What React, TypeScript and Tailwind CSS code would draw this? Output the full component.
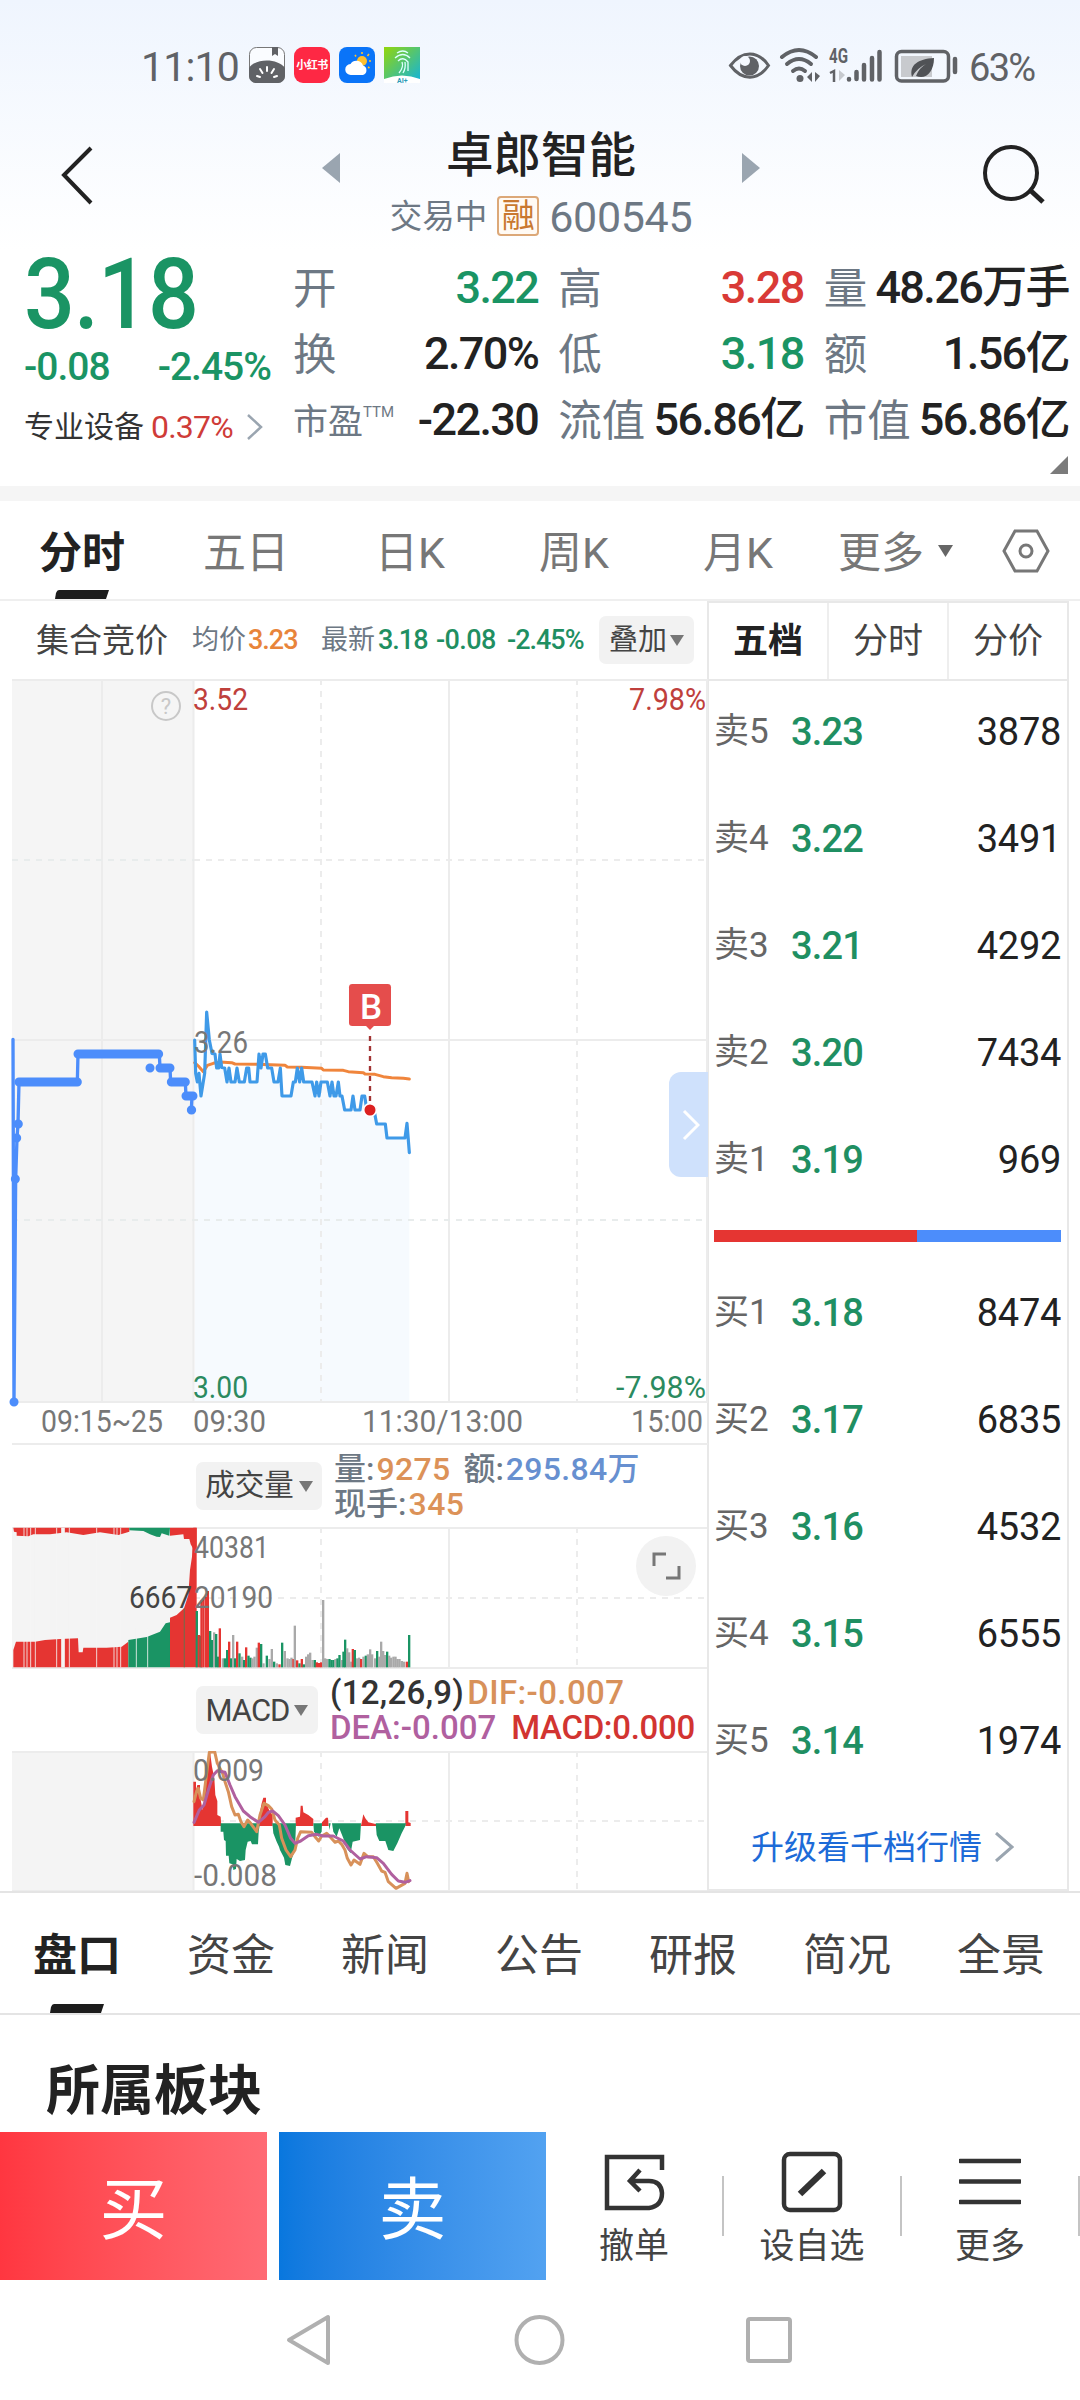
import type { ReactNode } from "react";
import clsx from "clsx";

const RED = "#e53532";
const GREEN = "#1a9464";
const GREY = "#a9a9a9";

interface Level {
  label: string;
  price: string;
  volume: string;
}

const asks: Level[] = [
  { label: "卖5", price: "3.23", volume: "3878" },
  { label: "卖4", price: "3.22", volume: "3491" },
  { label: "卖3", price: "3.21", volume: "4292" },
  { label: "卖2", price: "3.20", volume: "7434" },
  { label: "卖1", price: "3.19", volume: "969" },
];

const bids: Level[] = [
  { label: "买1", price: "3.18", volume: "8474" },
  { label: "买2", price: "3.17", volume: "6835" },
  { label: "买3", price: "3.16", volume: "4532" },
  { label: "买4", price: "3.15", volume: "6555" },
  { label: "买5", price: "3.14", volume: "1974" },
];

// Chart series use a grid of 3 units per pixel.
const PRICE =
  "584,240 587,340 592,366 597,340 603,408 614,340 620,156 628,240 636,280 645,282 650,324 656,324 660,282 665,322 674,324 681,366 687,324 693,366 705,366 711,324 718,366 733,366 740,324 746,324 750,366 771,366 777,282 783,324 789,282 796,282 803,324 815,324 822,366 834,366 841,324 846,408 873,408 880,366 886,366 892,324 899,366 905,324 911,366 936,366 945,408 950,366 957,408 963,366 982,366 990,408 996,366 1002,408 1008,408 1015,366 1020,408 1026,408 1034,450 1053,450 1059,408 1065,450 1080,450 1086,408 1094,408 1099,440 1110,450 1124,460 1130,492 1156,492 1161,534 1215,534 1221,490 1228,578";
const AVERAGE =
  "584,308 595,318 610,335 622,316 640,310 660,306 695,308 705,312 770,313 855,316 862,321 905,322 965,325 970,330 1030,331 1045,335 1090,338 1095,342 1125,343 1150,350 1175,353 1210,355 1228,357";
const AUCTION = "39,238 42,1326 47,657 51,534 54,492 57,366 232,366 234,282 478,282 480,324 510,324 512,366 556,366 558,408 576,408 574,450";

const DIF =
  "42,200 50,168 55,160 62,190 70,195 78,130 88,52 104,50 112,85 120,100 128,115 135,140 145,170 155,215 165,240 175,238 183,260 192,275 203,255 212,265 230,290 240,240 252,205 265,212 275,222 285,255 298,270 305,310 318,345 332,365 345,345 353,310 362,290 395,292 405,305 416,318 425,303 440,295 450,305 465,322 475,318 485,328 495,345 502,370 513,390 522,375 540,388 552,355 563,365 580,365 592,385 605,408 615,412 625,440 648,460 675,445 681,415 686,440";
const DEA =
  "42,262 58,225 72,210 85,165 100,120 112,107 135,112 150,150 165,185 190,228 210,245 235,262 255,245 265,232 278,228 295,242 315,270 332,310 345,325 362,318 385,302 410,298 430,303 460,303 490,318 510,345 540,372 560,365 590,368 610,385 635,418 655,438 675,442 690,437";

// [x, top, colour], r = up, g = down, n = flat
type Bar = [number, number, "r" | "g" | "n"];
const bars: Bar[] = [
  [590, 288, "g"], [596, 360, "r"], [602, 362, "g"], [604, 255, "r"], [610, 250, "r"], [618, 245, "r"], [623, 228, "r"],
  [630, 348, "g"], [636, 375, "g"], [642, 352, "n"], [648, 357, "g"], [654, 425, "g"], [659, 340, "r"], [668, 430, "n"],
  [674, 430, "g"], [681, 405, "g"], [687, 380, "r"], [693, 430, "g"], [699, 360, "n"], [705, 430, "g"], [711, 380, "r"],
  [718, 415, "g"], [726, 425, "n"], [732, 435, "g"], [738, 397, "r"], [745, 422, "g"], [751, 428, "g"], [757, 430, "n"],
  [763, 425, "n"], [770, 398, "n"], [776, 383, "r"], [783, 387, "g"], [790, 445, "n"], [800, 422, "g"], [808, 432, "n"],
  [815, 402, "n"], [822, 440, "g"], [830, 445, "n"], [838, 448, "r"], [846, 383, "g"], [854, 408, "n"], [862, 430, "n"],
  [868, 432, "n"], [874, 428, "n"], [880, 432, "r"], [884, 332, "n"], [891, 436, "r"], [898, 445, "g"], [905, 432, "r"],
  [911, 448, "g"], [918, 425, "n"], [924, 418, "n"], [930, 413, "n"], [937, 435, "n"], [944, 435, "g"], [950, 442, "r"],
  [957, 444, "r"], [963, 442, "r"], [969, 255, "n"], [975, 430, "n"], [981, 432, "n"], [988, 432, "g"], [994, 435, "g"],
  [1000, 435, "g"], [1006, 432, "n"], [1012, 430, "g"], [1018, 420, "g"], [1025, 435, "n"], [1030, 410, "g"], [1035, 374, "g"],
  [1041, 400, "n"], [1047, 412, "n"], [1053, 440, "n"], [1058, 402, "r"], [1064, 405, "g"], [1071, 430, "n"], [1077, 428, "n"],
  [1083, 432, "r"], [1090, 425, "n"], [1097, 422, "g"], [1103, 418, "n"], [1110, 403, "n"], [1116, 418, "n"], [1125, 430, "n"],
  [1131, 408, "g"], [1137, 425, "n"], [1143, 380, "n"], [1149, 408, "n"], [1155, 420, "n"], [1161, 410, "g"], [1167, 422, "n"],
  [1173, 428, "n"], [1180, 425, "n"], [1186, 425, "n"], [1192, 432, "n"], [1198, 432, "n"], [1205, 438, "n"], [1211, 440, "n"],
  [1220, 440, "r"], [1227, 360, "g"],
];
const barColor = { r: RED, g: GREEN, n: GREY };

function StatusBar() {
  return (
    <div className="flex h-[66px] items-center pl-[141px] pr-[43px] mt-[32px] text-[#606266]">
      <span className="w-[98px] whitespace-nowrap pt-[5px] text-[41px] leading-none tracking-[-0.8px]">11:10</span>
      <div className="ml-[10px] flex gap-[9px]">
        <svg width="36" height="36" viewBox="0 0 36 36">
          <rect x="0.5" y="0.5" width="35" height="35" rx="7" fill="#fafcff" stroke="#777" />
          <path d="M0 21C6 11 29 11 36 21V29a7 7 0 0 1-7 7H7a7 7 0 0 1-7-7z" fill="#606266" />
          <path d="M23 0h6v9l-3-2-3 2z" fill="#606266" />
          <path d="M18 20v4M11 22l2.500 4M25 22l-2.500 4M8 29l3 1M28 29l-3 1" stroke="#fff" strokeWidth="2" strokeLinecap="round" />
        </svg>
        <div className="flex h-9 w-9 items-center justify-center rounded-[9px] bg-[#fe2844] text-[11px] font-bold leading-none tracking-[-0.5px] text-white">
          小红书
        </div>
        <svg width="36" height="36" viewBox="0 0 36 36">
          <rect width="36" height="36" rx="8" fill="#0a74f8" />
          <circle cx="23" cy="14" r="5" fill="#ffc02e" />
          <path d="M23 5v2M30 7l-1.500 2M32 14h-2M16 8l1 1.500M29 20l1.500 1" stroke="#ffc02e" strokeWidth="1.600" />
          <path d="M12 28a5.500 5.500 0 0 1-.5-11 7 7 0 0 1 12.500 1.500A5 5 0 0 1 24 28z" fill="#fff" />
        </svg>
        <svg width="36" height="36" viewBox="0 0 36 36">
          <defs>
            <linearGradient id="ai" x1="0" y1="0" x2="1" y2="1">
              <stop offset="0" stopColor="#93d60a" />
              <stop offset="1" stopColor="#10b2e0" />
            </linearGradient>
          </defs>
          <rect width="36" height="36" fill="url(#ai)" />
          <path d="M0 32q18-7 36 0v4H0z" fill="#fff" />
          <path d="M13 6q6-4 11 0M11 11q8-7 15 0M14 14q5-5 10 1v9M18 15q2 5-3 11M21 15q1 6-2 11" stroke="#dff" strokeWidth="1.300" fill="none" />
          <text x="13" y="35.500" fontSize="7" fontWeight="700" fill="#2a9ab8">AI+</text>
        </svg>
      </div>
      <div className="flex-1" />
      <svg width="232" height="40" viewBox="0 0 232 40" fill="none" stroke="#606266">
        <path d="M2.500 20.500C14 5 30 5 40.500 20.500C30 36 14 36 2.500 20.500z" strokeWidth="3" />
        <circle cx="21.500" cy="21" r="9.500" fill="#606266" stroke="none" />
        <circle cx="17" cy="16" r="5" fill="#f4f8fe" stroke="none" />
        <g strokeWidth="4" strokeLinecap="round">
          <path d="M54 12Q71 -2 88 12" />
          <path d="M59 19Q71 9 83 19" />
          <path d="M65 26Q71 21 77 26" />
        </g>
        <circle cx="72" cy="33.500" r="3.500" fill="#606266" stroke="none" />
        <path d="M79 32l5-5v10zM87 27v10l5-6z" fill="#606266" stroke="none" />
        <text x="101" y="18" fontSize="21" fontWeight="700" fill="#606266" stroke="none" textLength="19" lengthAdjust="spacingAndGlyphs">4G</text>
        <path d="M102 28l4-2v11" strokeWidth="2.500" />
        <path d="M111 25v11l6-6z" fill="#c6c9ce" stroke="none" />
        <g strokeWidth="4.500" strokeLinecap="round">
          <path d="M121 34v.500M128.500 27v7M136 20v14.500M144 13v21.500M151.500 7v27.500" />
        </g>
        <rect x="168.500" y="6.500" width="52" height="29.500" rx="5" strokeWidth="3.500" />
        <rect x="173" y="11" width="31" height="21" fill="#c8cace" stroke="none" />
        <path d="M184 32c-3-12 6-18 22-19c0 14-8 22-18 18q3-8 10-12q-9 4-14 13z" fill="#505256" stroke="none" />
        <path d="M227 14v13" strokeWidth="4.500" strokeLinecap="round" />
      </svg>
      <span className="ml-[9px] w-[68px] whitespace-nowrap pt-[5px] text-[38px] leading-none tracking-[-1.700px]">63%</span>
    </div>
  );
}

function Header() {
  return (
    <div className="flex h-[150px] justify-between pl-[36px] pr-[26px]">
      <svg width="80" height="150" viewBox="0 0 80 150" fill="none" stroke="#222" strokeWidth="4">
        <path d="M55 50L28 77L55 105" />
      </svg>
      <div className="ml-[-8px] flex w-[438px] items-start justify-between">
        <svg className="mt-[55px]" width="18" height="30"><path d="M18 0v30L0 15z" fill="#9aa5b0" /></svg>
        <div className="flex flex-col items-center">
          <h1 className="mt-[31px] text-[47.500px] font-medium leading-[54px] text-[#222]">卓郎智能</h1>
          <div className="mt-[9px] flex items-center whitespace-nowrap text-[#6d7884]">
            <span className="pt-[2px] text-[32.500px] leading-[44px]">交易中</span>
            <span className="ml-[10px] flex h-[40px] w-[42px] items-center justify-center rounded-[4px] border-2 border-[#dca878] bg-[#fffaf4] text-[33px] leading-none text-[#c97830]">
              融
            </span>
            <span className="ml-[10px] pt-[3px] text-[43px] leading-[44px] tracking-[-0.300px]">600545</span>
          </div>
        </div>
        <svg className="mt-[55px]" width="18" height="30"><path d="M0 0v30L18 15z" fill="#9aa5b0" /></svg>
      </div>
      <svg width="80" height="150" viewBox="0 0 80 150" fill="none" stroke="#222" strokeWidth="4">
        <circle cx="37" cy="75" r="26" />
        <path d="M56 92L69 104" strokeWidth="5" />
      </svg>
    </div>
  );
}

interface QuoteProps {
  label: ReactNode;
  value: string;
  color?: string;
}

function Quote({ label, value, color = "text-[#222]" }: QuoteProps) {
  return (
    <div className="flex h-[66px] items-center justify-between whitespace-nowrap">
      <span className="pt-[6px] text-[43.500px] leading-none text-[#6d7884]">{label}</span>
      <span className={clsx("text-[45px] font-medium leading-none tracking-[-1.600px]", color)}>{value}</span>
    </div>
  );
}

function Summary() {
  return (
    <div className="relative flex h-[238px]">
      <div className="w-[293px] shrink-0 pl-[24px]">
        <div className="mt-[-4px] h-[101px] origin-left scale-x-[0.915] whitespace-nowrap text-[98px] font-medium leading-[101px] tracking-[-1px] text-[#1a9464]">
          3.18
        </div>
        <div className="flex w-[247px] justify-between whitespace-nowrap text-[39px] font-medium leading-[44px] tracking-[-1px] text-[#1a9464]">
          <span>-0.08</span>
          <span>-2.45%</span>
        </div>
        <div className="mt-[16px] flex h-[44px] items-center whitespace-nowrap text-[30px] leading-none text-[#333]">
          专业设备
          <span className="ml-[7px] text-[32px] tracking-[-0.800px] text-[#cf3c38]">0.37%</span>
          <svg className="ml-[13px]" width="17" height="28" fill="none" stroke="#9aa5b0" strokeWidth="2.500"><path d="M2 2L15 14L2 26" /></svg>
        </div>
      </div>
      <div className="mt-[6px] grid h-[198px] w-[776px] grid-cols-3 gap-x-[20px]">
        <Quote label="开" value="3.22" color="text-[#1a9464]" />
        <Quote label="高" value="3.28" color="text-[#d93a36]" />
        <Quote label="量" value="48.26万手" />
        <Quote label="换" value="2.70%" />
        <Quote label="低" value="3.18" color="text-[#1a9464]" />
        <Quote label="额" value="1.56亿" />
        <Quote
          label={
            <span className="flex items-start text-[35px]">
              市盈<span className="text-[15px] leading-none">TTM</span>
            </span>
          }
          value="-22.30"
        />
        <Quote label="流值" value="56.86亿" />
        <Quote label="市值" value="56.86亿" />
      </div>
      <svg className="absolute right-[12px] bottom-[12px]" width="18" height="18"><path d="M18 0v18H0z" fill="#7b7b7b" /></svg>
    </div>
  );
}

function Marker() {
  return <svg width="54" height="9"><path d="M4 0H54L51 9H0L1 3Q2 0 4 0z" fill="#1c1c1c" /></svg>;
}

function PeriodTabs() {
  const tabs = ["分时", "五日", "日K", "周K", "月K"];
  return (
    <div className="flex h-[100px] border-b-2 border-[#efefef] text-[43px] leading-none text-[#777]">
      {tabs.map((tab, i) => (
        <div key={tab} className="flex w-[164px] flex-col items-center justify-between pt-[31px]">
          <span className={clsx(i === 0 && "font-bold text-[#222]")}>{tab}</span>
          {i === 0 && <Marker />}
        </div>
      ))}
      <div className="flex items-start pl-[18px] pt-[31px]">
        更多
        <svg className="ml-[14px] mt-[13px]" width="15" height="12"><path d="M0 0H15L7.500 12z" fill="#666" /></svg>
        <svg className="ml-[49px] mt-[-3px]" width="48" height="44" viewBox="0 0 48 44" fill="none" stroke="#777" strokeWidth="3">
          <path d="M13 2H35L46 22L35 42H13L2 22z" />
          <circle cx="24" cy="22" r="6" />
        </svg>
      </div>
    </div>
  );
}

function Arrow({ className }: { className?: string }) {
  return <svg className={className} width="14" height="11"><path d="M0 0H14L7 11z" fill="#777" /></svg>;
}

// Vertical grid shared by the three plots
function Grid({ height, middle }: { height: number; middle: number }) {
  return (
    <g stroke="#ececec" strokeWidth="2" fill="none">
      <path d={`M12 1H707M12 ${height - 1}H707M193.500 0V${height}M449 0V${height}`} />
      <path d={`M321 0V${height}M577 0V${height}M194 ${middle}H707`} strokeDasharray="6 6" />
    </g>
  );
}

interface LabelProps {
  x: number;
  y: number;
  w: number;
  fill?: string;
  children: string;
}

function AxisLabel({ x, y, w, fill = "#777", children }: LabelProps) {
  return (
    <text x={x} y={y} fontSize="32" fill={fill} textLength={w} lengthAdjust="spacingAndGlyphs">
      {children}
    </text>
  );
}

function PriceChart() {
  return (
    <div className="relative h-[766px]">
      <svg width="708" height="766" viewBox="0 0 708 766">
        <rect x="12" y="0" width="181" height="724" fill="#f5f5f5" />
        <polygon points={`584,1326 ${PRICE} 1228,1326`} transform="translate(0 281) scale(.33333)" fill="#f6fafe" />
        <Grid height={724} middle={181} />
        <path d="M12 361H707M102 0V724M707 0V724" stroke="#ececec" strokeWidth="2" />
        <path d="M12 181H194M12 541H707" stroke="#e8ecec" strokeWidth="2" strokeDasharray="6 6" />
        <circle cx="166" cy="27" r="14" fill="none" stroke="#c8c8c8" strokeWidth="2" />
        <text x="166" y="35" fontSize="22" textAnchor="middle" fill="#c8c8c8">?</text>
        <AxisLabel x={193} y={31} w={55} fill="#bf403c">3.52</AxisLabel>
        <AxisLabel x={629} y={31} w={77} fill="#bf403c">7.98%</AxisLabel>
        <AxisLabel x={193} y={719} w={55} fill="#2b8a60">3.00</AxisLabel>
        <AxisLabel x={616} y={719} w={90} fill="#2b8a60">-7.98%</AxisLabel>
        <g transform="translate(0 281) scale(.33333)" fill="none" strokeLinejoin="round" strokeLinecap="round">
          <polyline points={AUCTION} stroke="#4c8dfb" strokeWidth="10" />
          <path d="M57 366H232M234 282H476M480 324H510M514 366H556M558 408H579M574 450h1M450 324h.1M54 492h1M50 534h.1M46 657h.1M42 1326h.1" stroke="#4c8dfb" strokeWidth="27" />
          <polyline points={AVERAGE} stroke="#f0853c" strokeWidth="9" />
          <polyline points={PRICE} stroke="#3f9ae8" strokeWidth="9.500" />
          <path d="M1110 228V440" stroke="#a23434" strokeWidth="7" strokeDasharray="15 15" strokeLinecap="butt" />
          <rect x="1047" y="72" width="126" height="126" rx="10" fill="#e54d4c" />
          <path d="M1096 196H1124L1110 210z" fill="#e54d4c" />
          <circle cx="1110" cy="450" r="19" fill="#dc2020" stroke="#fff" strokeWidth="5" />
        </g>
        <text x="371" y="340" fontSize="35" fontWeight="500" textAnchor="middle" fill="#fff">B</text>
        <AxisLabel x={194} y={374} w={54}>3.26</AxisLabel>
        <AxisLabel x={41} y={753} w={122}>09:15~25</AxisLabel>
        <AxisLabel x={193} y={753} w={73}>09:30</AxisLabel>
        <AxisLabel x={362} y={753} w={161}>11:30/13:00</AxisLabel>
        <AxisLabel x={631} y={753} w={72}>15:00</AxisLabel>
        <path d="M12 765H708" stroke="#ececec" strokeWidth="2" />
      </svg>
      <div className="absolute right-0 top-[393px] flex h-[105px] w-[39px] items-center justify-center rounded-l-[12px] bg-[#cfe1fc]">
        <svg className="ml-[4px]" width="18" height="32" fill="none" stroke="#fff" strokeWidth="3"><path d="M2 2L16 16L2 30" /></svg>
      </div>
    </div>
  );
}

function VolumeChart() {
  return (
    <div className="relative h-[142px]">
      <svg width="708" height="142" viewBox="0 0 708 142">
        <rect x="12" y="0" width="182" height="141" fill="#f4f4f4" />
        <Grid height={142} middle={71} />
        <g transform="translate(0 -12) scale(.33333)">
          <polygon points="40,457 40,405 48,380 105,380 135,375 180,372 234,370 236,412 248,412 250,398 320,398 365,395 385,380 385,457" fill={RED} />
          <polygon points="385,457 385,375 440,366 480,350 497,325 510,322 510,457" fill={GREEN} />
          <polygon points="510,457 510,308 530,300 552,280 565,240 570,165 576,125 580,38 590,38 590,457" fill={RED} />
          <polygon points="40,38 42,50 50,52 50,62 85,64 100,58 150,58 200,52 250,60 300,52 355,60 388,50 388,38" fill={RED} />
          <polygon points="388,38 388,46 430,48 450,58 470,65 480,66 485,55 508,62 510,38" fill={GREEN} />
          <polygon points="510,38 510,62 550,58 552,72 568,72 572,88 580,102 590,102 590,38" fill={RED} />
          <path d="M72 38V457M81 38V457M92 38V457M106 38V457M170 38V457M208 38V457M290 38V457M342 38V457M351 38V457M362 38V457M409 340V457M443 340V457" stroke="#f4f4f4" strokeWidth="2.500" />
          <path d="M189 38V457" stroke="#f4f4f4" strokeWidth="11" />
          <path d="M553 280V457" stroke="#8a6046" strokeWidth="4" />
          {bars.map(([x, top, c]) => (
            <rect key={x} x={x - 3} y={top} width="7" height={457 - top} fill={barColor[c]} />
          ))}
        </g>
        <AxisLabel x={194} y={31} w={75}>40381</AxisLabel>
        <AxisLabel x={129} y={81} w={63} fill="#444">6667</AxisLabel>
        <AxisLabel x={194} y={81} w={79}>20190</AxisLabel>
      </svg>
      <div className="absolute right-[12px] top-[9px] h-[60px] w-[60px] rounded-full bg-[#f2f2f2]">
        <svg width="60" height="60" fill="none" stroke="#777" strokeWidth="3"><path d="M18 30V18H30M43 30V42H30" /></svg>
      </div>
    </div>
  );
}

function MacdChart() {
  return (
    <svg className="block" width="708" height="141" viewBox="0 0 708 141">
      <rect x="12" y="0" width="181" height="141" fill="#f4f4f4" />
      <Grid height={141} middle={70} />
      <g transform="translate(180 -16) scale(.33333)">
        <g fill={RED}>
          <path d="M40 273V140H48V165L52 150H60V185L68 225L74 190L78 120L84 70L90 50L96 95L103 130L106 180L112 198V240L122 245L124 273z" />
          <path d="M232 273L238 240L245 205L250 188H258V205L270 230L278 240V273z" />
          <path d="M347 273V248L360 245L362 212H368L370 232L385 240L400 252V273z" />
          <path d="M424 273L426 262L438 248H444L446 273zM543 273L550 238L556 250L565 262L590 268V273zM676 273V228H685V262L692 264V273z" />
        </g>
        <g fill={GREEN}>
          <path d="M122 265V290H130L132 315L137 318L138 362H146L148 385L158 388L160 405L168 402L170 372L180 378L195 375L197 345L203 320L212 318L216 328H234L236 290L240 265z" />
          <path d="M277 265L280 295L290 320L297 335L300 345L312 368L316 390L330 393L336 370L345 345L348 265z" />
          <path d="M400 265L402 290L415 305L425 290L426 265zM446 265L448 285L452 265zM456 265L460 290L470 305L478 280L490 310L500 340L512 355L518 320L540 315L543 265z" />
          <path d="M587 265L590 300L598 318H616L625 345L640 348L652 325L665 295L675 275L678 265z" />
        </g>
        <g fill="none" strokeWidth="9" strokeLinejoin="round" strokeLinecap="round">
          <polyline points={DIF} stroke="#d8915a" />
          <polyline points={DEA} stroke="#b0609f" />
        </g>
      </g>
      <AxisLabel x={193} y={30} w={71}>0.009</AxisLabel>
      <AxisLabel x={194} y={135} w={83}>-0.008</AxisLabel>
    </svg>
  );
}

function ChartPanel() {
  return (
    <div className="w-[708px] shrink-0">
      <div className="flex h-[78px] items-center whitespace-nowrap pl-[36px] text-[27px] leading-none text-[#6d7884]">
        <span className="w-[156px] text-[33px] text-[#444]">集合竞价</span>
        均价
        <span className="ml-[2px] w-[73px] font-medium tracking-[-1px] text-[#e8843a]">3.23</span>
        最新
        <span className="ml-[3px] w-[58px] font-medium tracking-[-1px] text-[#1f8f62]">3.18</span>
        <span className="w-[71px] font-medium tracking-[-0.600px] text-[#1f8f62]">-0.08</span>
        <span className="w-[92px] font-medium tracking-[-1px] text-[#1f8f62]">-2.45%</span>
        <span className="flex h-[48px] w-[95px] items-center justify-center gap-[3px] rounded-[7px] bg-[#f2f2f2] text-[29px] text-[#444]">
          叠加
          <Arrow />
        </span>
      </div>
      <PriceChart />
      <div className="flex h-[82px] items-start whitespace-nowrap pl-[196px]">
        <div className="mt-[17px] flex h-[48px] w-[126px] items-center justify-center gap-[5px] rounded-[7px] bg-[#f2f2f2] text-[29.500px] leading-none text-[#444]">
          成交量
          <Arrow />
        </div>
        <div className="ml-[12px] mt-[7px] text-[32px] font-medium leading-[35px] text-[#6d7884]">
          <div>
            量:<span className="ml-[2px] tracking-[0.300px] text-[#dc9258]">9275</span>
            <span className="ml-[13px]">额:</span>
            <span className="ml-[2px] tracking-[0.300px] text-[#6790d0]">295.84万</span>
          </div>
          <div>
            现手:<span className="ml-[2px] tracking-[0.500px] text-[#dc9258]">345</span>
          </div>
        </div>
      </div>
      <VolumeChart />
      <div className="flex h-[82px] items-start whitespace-nowrap pl-[196px]">
        <div className="mt-[17px] flex h-[48px] w-[122px] items-center justify-center gap-[5px] rounded-[7px] bg-[#f2f2f2] text-[31px] leading-none text-[#444]">
          <span className="tracking-[-1px]">MACD</span>
          <Arrow />
        </div>
        <div className="ml-[12px] mt-[6px] text-[33px] font-medium leading-[35px]">
          <div>
            <span className="tracking-[0.300px] text-[#333]">(12,26,9)</span>
            <span className="ml-[3px] tracking-[0.400px] text-[#d8915a]">DIF:-0.007</span>
          </div>
          <div>
            <span className="text-[#b0609f]">DEA:-0.007</span>
            <span className="ml-[15px] tracking-[-0.300px] text-[#d23431]">MACD:0.000</span>
          </div>
        </div>
      </div>
      <MacdChart />
    </div>
  );
}

function LevelRow({ label, price, volume }: Level) {
  return (
    <div className="flex h-[107px] items-center whitespace-nowrap leading-none">
      <span className="w-[77px] text-[35px] text-[#666]">{label}</span>
      <span className="text-[38px] font-medium tracking-[-0.800px] text-[#1f8f62]">{price}</span>
      <span className="ml-auto text-[38px] tracking-[-0.300px] text-[#222]">{volume}</span>
    </div>
  );
}

function OrderBook() {
  return (
    <div className="ml-[-1px] flex w-[362px] flex-col border-2 border-[#e8e8e8]">
      <div className="flex h-[78px] shrink-0 border-b-2 border-[#e8e8e8] text-[35px] leading-none text-[#444]">
        <div className="flex flex-1 items-center justify-center font-bold text-[#222]">五档</div>
        <div className="flex flex-1 items-center justify-center border-x-2 border-[#eee]">分时</div>
        <div className="flex flex-1 items-center justify-center">分价</div>
      </div>
      <div className="mt-[-3px] pl-[5px] pr-[6px]">
        {asks.map((level) => (
          <LevelRow key={level.label} {...level} />
        ))}
        <div className="my-[17px] flex h-[12px]">
          <div className="w-[203px] bg-[#e53532]" />
          <div className="flex-1 bg-[#4c8dfb]" />
        </div>
        {bids.map((level) => (
          <LevelRow key={level.label} {...level} />
        ))}
      </div>
      <div className="flex flex-1 items-center whitespace-nowrap pb-[3px] pl-[42px] pt-[14px] text-[33px] leading-none text-[#1d6bd8]">
        升级看千档行情
        <svg className="ml-[12px]" width="20" height="30" fill="none" stroke="#9aa5b0" strokeWidth="3"><path d="M2 1L18 15L2 29" /></svg>
      </div>
    </div>
  );
}

function InfoTabs() {
  const tabs = ["盘口", "资金", "新闻", "公告", "研报", "简况", "全景"];
  return (
    <div className="flex h-[124px] border-y-2 border-[#e4e4e4] text-[44px] leading-none text-[#444]">
      {tabs.map((tab, i) => (
        <div key={tab} className="flex w-[154px] flex-col items-center justify-between pt-[41px]">
          <span className={clsx(i === 0 && "font-bold text-[#222]")}>{tab}</span>
          {i === 0 && <Marker />}
        </div>
      ))}
    </div>
  );
}

function Action({ label, children }: { label: string; children: ReactNode }) {
  return (
    <div className="flex flex-1 flex-col items-center pt-[19px] text-[35px] leading-none text-[#444]">
      <svg width="62" height="62" viewBox="0 0 62 62" fill="none" stroke="#333" strokeWidth="4.500">
        {children}
      </svg>
      <span className="mt-[16px]">{label}</span>
    </div>
  );
}

function TradeBar() {
  return (
    <div className="flex h-[148px] text-[68px] leading-none text-white">
      <div className="flex w-[267px] items-center justify-center bg-linear-to-r from-[#ff3640] to-[#ff6a74] pt-[10px]">买</div>
      <div className="ml-[12px] flex w-[267px] items-center justify-center bg-linear-to-r from-[#0877de] to-[#52a2f1] pt-[10px]">卖</div>
      <div className="flex flex-1 items-stretch">
        <Action label="撤单">
          <path d="M59 19V6H4V57H46Q59 55 59 42Q58 30 46 30H28M37 19L27 30L37 40" />
        </Action>
        <div className="mt-[44px] h-[60px] w-[2px] bg-[#c4c4c4]" />
        <Action label="设自选">
          <rect x="3" y="3" width="56" height="56" rx="6" />
          <path d="M19 43L43 20" strokeWidth="6.500" />
        </Action>
        <div className="mt-[44px] h-[60px] w-[2px] bg-[#c4c4c4]" />
        <Action label="更多">
          <path d="M1 10H61M1 30.500H61M1 51H61" strokeLinecap="round" />
        </Action>
        <div className="mt-[44px] h-[60px] w-[2px] bg-[#c4c4c4]" />
      </div>
    </div>
  );
}

function SystemNav() {
  return (
    <div className="flex h-[120px] items-center justify-between pl-[284px] pr-[287px]">
      <svg width="48" height="54" viewBox="0 0 48 54" fill="none" stroke="#b0b0b0" strokeWidth="4" strokeLinejoin="round"><path d="M44 4V50L5 27z" /></svg>
      <svg width="52" height="52" fill="none" stroke="#b0b0b0" strokeWidth="4"><circle cx="26.500" cy="26" r="23" /></svg>
      <svg width="48" height="48" fill="none" stroke="#b0b0b0" strokeWidth="4"><rect x="3" y="3" width="42" height="42" rx="2" /></svg>
    </div>
  );
}

export default function App() {
  return (
    <div className="flex h-[2400px] w-[1080px] flex-col overflow-hidden bg-white font-[Roboto,'Noto_Sans_CJK_SC',sans-serif]">
      <div className="flex h-[486px] shrink-0 flex-col bg-linear-to-b from-[#eff5fe] to-white to-[250px]">
        <StatusBar />
        <Header />
        <Summary />
      </div>
      <div className="h-[15px] shrink-0 bg-[#f5f5f5]" />
      <PeriodTabs />
      <div className="flex h-[1290px] shrink-0">
        <ChartPanel />
        <OrderBook />
      </div>
      <InfoTabs />
      <h2 className="flex h-[117px] items-center pl-[46px] pt-[36px] text-[54px] font-bold leading-none text-[#222]">所属板块</h2>
      <TradeBar />
      <SystemNav />
    </div>
  );
}
